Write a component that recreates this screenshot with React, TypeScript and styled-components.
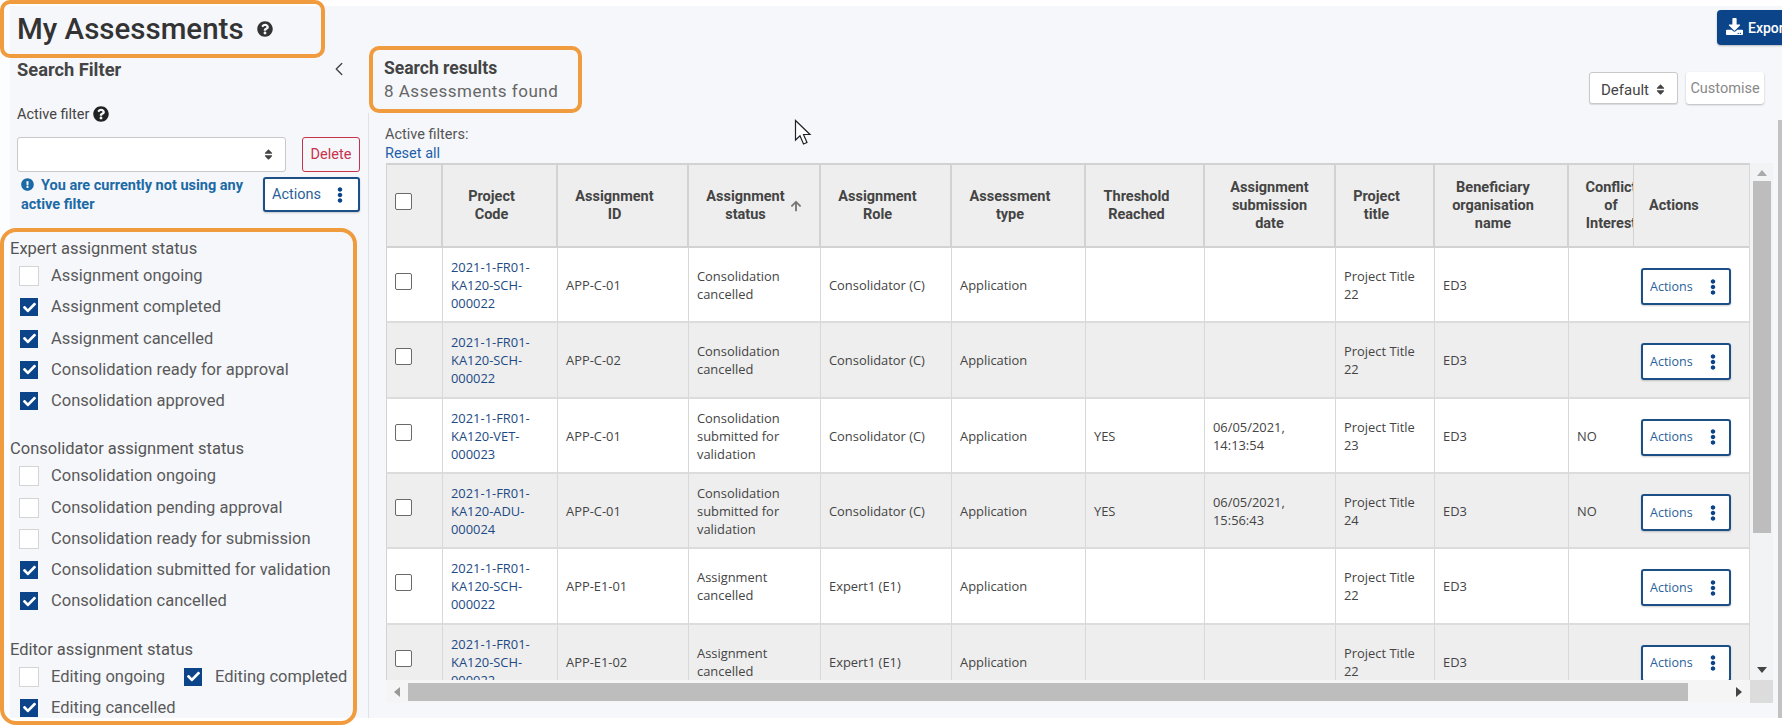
import React from 'react'
import styled, { createGlobalStyle } from 'styled-components'
import { ChevronLeft } from 'lucide-react'
import {
    FaArrowUp,
    FaCheck,
    FaDownload,
    FaEllipsisV,
    FaExclamationCircle,
    FaQuestionCircle,
    FaSort,
} from 'react-icons/fa'

const ORANGE = '#f09b3d'
const NAVY = '#0b4489'

const GlobalStyle = createGlobalStyle`
    html, body {
        margin: 0;
        padding: 0;
        background: #fff;
    }
    * {
        box-sizing: border-box;
    }
    body {
        font-family: Roboto, "Liberation Sans", sans-serif;
    }
`

const Page = styled.div`
    position: relative;
    width: 1782px;
    height: 727px;
    padding: 6px 0 9px;
    overflow: hidden;
    background: #fff;
`

const Canvas = styled.div`
    display: flex;
    height: 712px;
    background: linear-gradient(to right, #fcfdfe 10px, #f5f7fb 10px);
`

const PageScrollbar = styled.div`
    position: absolute;
    top: 120px;
    right: 0;
    width: 4px;
    height: 598px;
    background: #c2c2c2;
`

const Cursor = styled.svg`
    position: absolute;
    top: 119px;
    left: 794px;
`

const Sidebar = styled.aside`
    flex: 0 0 368px;
    margin-top: -6px;
    color: #444;
`

const Mark = styled.div`
    border: 4px solid ${ORANGE};
    border-radius: 10px;
`

const TitleBox = styled(Mark)`
    display: flex;
    align-items: center;
    gap: 13px;
    width: 325px;
    height: 58px;
    padding: 0 0 0 13px;
`

const Title = styled.h1`
    margin: 0;
    font-size: 29.5px;
    font-weight: 500;
    color: #333;
`

const TitleHelp = styled(FaQuestionCircle)`
    font-size: 16px;
    color: #333;
`

const SearchHead = styled.div`
    display: flex;
    align-items: center;
    justify-content: space-between;
    height: 22px;
    padding: 0 18px 0 17px;
    font-size: 18.3px;
    font-weight: 700;
`

const ActiveLabel = styled.div`
    display: flex;
    align-items: center;
    gap: 4px;
    height: 20px;
    margin-top: 24px;
    padding-left: 17px;
    font-size: 14.5px;
`

const FilterRow = styled.div`
    display: flex;
    gap: 16px;
    height: 35px;
    margin-top: 13px;
    padding-left: 17px;
`

const Select = styled.div<{ $width: number }>`
    display: flex;
    align-items: center;
    justify-content: flex-end;
    width: ${(p) => p.$width}px;
    background: #fff;
    border: 1px solid #c9c9c9;
    border-radius: 3px;
    padding-right: 10px;
    color: #444;
    font-size: 14px;
`

const SortIcon = styled(FaSort)`
    font-size: 13px;
    color: #444;
`

const DeleteButton = styled.div`
    display: flex;
    align-items: center;
    justify-content: center;
    width: 58px;
    border: 1px solid #c8324a;
    border-radius: 3px;
    color: #c8324a;
    font-size: 14.5px;
`

const NoteRow = styled.div`
    display: flex;
    justify-content: space-between;
    height: 35px;
    margin-top: 4px;
    padding: 0 8px 0 21px;
`

const Note = styled.div`
    width: 236px;
    font-size: 14.5px;
    font-weight: 700;
    line-height: 19px;
    color: #1b6aa5;
    svg {
        font-size: 13px;
        margin: 0 7px -1px 0;
    }
`

const ActionsButton = styled.div<{ $small?: boolean }>`
    display: flex;
    align-items: center;
    justify-content: space-between;
    width: ${(p) => (p.$small ? 90 : 97)}px;
    height: ${(p) => (p.$small ? 37 : 35)}px;
    margin-top: ${(p) => (p.$small ? 3 : 1)}px;
    padding: 0 ${(p) => (p.$small ? 8 : 10)}px 0 7px;
    background: #fff;
    border: 2px solid #1c4f86;
    border-radius: 3px;
    box-shadow: 0 1px 2px rgba(0, 0, 0, 0.2);
    color: #2a5f99;
    font-size: ${(p) => (p.$small ? 12.5 : 14.5)}px;
    font-family: ${(p) => (p.$small ? '"Open Sans", sans-serif' : 'inherit')};
    svg {
        font-size: 16px;
        color: ${NAVY};
    }
`

const FilterBox = styled(Mark)`
    width: 357px;
    height: 497px;
    margin-top: 17px;
    padding: 7px 0 0 6px;
    border-radius: 16px;
`

const Section = styled.div`
    & + & {
        margin-top: 22.4px;
    }
`

const SectionTitle = styled.div`
    height: 20px;
    margin-bottom: 1.4px;
    font-size: 16.5px;
    line-height: 20px;
    color: #555;
`

const Option = styled.div<{ $width?: number }>`
    display: flex;
    align-items: center;
    gap: 12px;
    height: 31.3px;
    width: ${(p) => (p.$width ? `${p.$width}px` : 'auto')};
    padding-left: 9px;
    font-size: 16.5px;
    color: #5a5a5a;
    white-space: nowrap;
`

const OptionLabel = styled.span`
    margin-top: -1px;
`

const OptionLine = styled.div`
    display: flex;
`

const Box = styled.span<{ $checked?: boolean }>`
    display: flex;
    flex: none;
    align-items: center;
    justify-content: center;
    width: 20px;
    height: 20px;
    background: ${(p) => (p.$checked ? NAVY : '#fff')};
    border: ${(p) => (p.$checked ? `1px solid #f5f7fb` : '1px solid #d4d4d4')};
    color: #fff;
    svg {
        font-size: 13px;
    }
`

const Main = styled.main`
    flex: 1;
    display: flex;
    flex-direction: column;
    min-width: 0;
`

const TopBar = styled.div`
    display: flex;
    justify-content: flex-end;
    height: 35px;
    margin: 4px -25px 0 0;
`

const ExportButton = styled.div`
    display: flex;
    align-items: center;
    gap: 5px;
    width: 90px;
    padding-left: 9px;
    background: ${NAVY};
    border-radius: 4px;
    box-shadow: 0 1px 2px rgba(0, 0, 0, 0.25);
    color: #fff;
    font-size: 14px;
    font-weight: 500;
    svg {
        font-size: 17px;
        margin-top: -3px;
    }
`

const ResultsBar = styled.div`
    display: flex;
    justify-content: space-between;
    height: 67px;
    margin-top: 1px;
    padding: 0 18px 0 1px;
`

const ResultsBox = styled(Mark)`
    width: 213px;
    padding: 7px 0 0 11px;
    background: #f5f7fb;
`

const ResultsTitle = styled.div`
    font-size: 17.5px;
    font-weight: 700;
    line-height: 23px;
    color: #444;
`

const ResultsCount = styled.div`
    font-size: 17px;
    line-height: 23px;
    letter-spacing: 0.5px;
    color: #666;
`

const Controls = styled.div`
    display: flex;
    gap: 8px;
    height: 32px;
    margin-top: 26px;
`

const ViewSelect = styled(Select)`
    justify-content: space-between;
    padding: 3px 10px 0 11px;
    font-size: 15px;
    box-shadow: 0 1px 1px rgba(0, 0, 0, 0.12);
`

const CustomiseButton = styled.div`
    display: flex;
    align-items: center;
    justify-content: center;
    width: 78px;
    padding-top: 1px;
    background: #fff;
    border-radius: 3px;
    box-shadow: 0 1px 2px rgba(0, 0, 0, 0.25);
    color: #888;
    font-size: 14.5px;
`

const Results = styled.section`
    flex: 1;
    padding: 13px 0 0 17px;
    border-left: 1px solid #dfe1e6;
`

const ActiveFilters = styled.div`
    margin-left: -1px;
    font-size: 14.5px;
    line-height: 18px;
    color: #555;
`

const ResetLink = styled.a`
    display: block;
    margin: 1px 0 0 -1px;
    font-size: 14.5px;
    line-height: 18px;
    color: #1f5fa8;
`

const Frame = styled.div`
    display: grid;
    grid-template-columns: 1364px 23px;
    grid-template-rows: 517px 23px;
    width: 1387px;
`

const TableClip = styled.div`
    overflow: hidden;
    border-right: 1px solid #d8d8d8;
`

const Table = styled.table`
    width: 1385px;
    table-layout: fixed;
    border-collapse: separate;
    border-spacing: 0;
`

const Th = styled.th<{ $sortable?: boolean }>`
    height: 85px;
    padding: 0 ${(p) => (p.$sortable ? 22 : 6)}px 0 6px;
    background: #eeeeee;
    border-top: 2px solid #d2d2d2;
    border-right: 2px solid #d2d2d2;
    border-bottom: 2px solid #d2d2d2;
    font-size: 14.5px;
    font-weight: 700;
    line-height: 18px;
    color: #444;
    text-align: center;
    white-space: pre-line;
    &:first-child {
        border-left: 1px solid #d2d2d2;
        padding-left: 8px;
        text-align: left;
    }
`

const HeadInner = styled.span`
    display: inline-flex;
    align-items: center;
    gap: 5px;
    svg {
        font-size: 12px;
        color: #777;
    }
`

const ActionsHead = styled(Th)`
    position: sticky;
    right: 0;
    padding-left: 15px;
    text-align: left;
    border-left: 1px solid #d2d2d2;
    border-right: 0;
`

const Tr = styled.tr<{ $even: boolean }>`
    height: 75.33px;
    background: ${(p) => (p.$even ? '#eeeeee' : '#fff')};
`

const Td = styled.td`
    padding: 1px 6px 0 8px;
    background: inherit;
    border-right: 1px solid #d8d8d8;
    border-bottom: 2px solid #dcdcdc;
    font-family: "Open Sans", sans-serif;
    font-size: 12.9px;
    line-height: 18px;
    color: #444;
    &:first-child {
        border-left: 1px solid #d2d2d2;
    }
`

const ProjectLink = styled.a`
    color: #1d4a85;
`

const ActionsCell = styled(Td)`
    position: sticky;
    right: 0;
    padding-left: 8px;
    border-right: 0;
`

const RowCheck = styled.span<{ $head?: boolean }>`
    display: block;
    width: 17px;
    height: 17px;
    margin-bottom: ${(p) => (p.$head ? 9 : 7)}px;
    background: #fff;
    border: 1px solid #6a6a6a;
    border-radius: 2px;
`

const VScroll = styled.div`
    display: flex;
    flex-direction: column;
    align-items: center;
    padding: 7px 2px 7px 3px;
    background: #f2f3f5;
`

const VThumb = styled.div`
    flex: none;
    width: 18px;
    height: 352px;
    margin: 5px 0 auto;
    background: #bdbdbd;
`

const HScroll = styled.div`
    display: flex;
    align-items: center;
    padding: 0 8px;
    background: #f5f5f5;
`

const HThumb = styled.div`
    flex: none;
    width: 1280px;
    height: 18px;
    margin: 0 auto 0 8px;
    background: #bdbdbd;
`

const Corner = styled.div`
    background: #dcdcdc;
`

const Triangle = styled.span<{ $dir: 'up' | 'down' | 'left' | 'right' }>`
    flex: none;
    width: 0;
    height: 0;
    border-style: solid;
    border-color: transparent;
    border-width: ${(p) => (p.$dir === 'up' || p.$dir === 'down' ? '6px 5px' : '5px 6px')};
    ${(p) => {
        if (p.$dir === 'up') return 'border-top-width: 0; border-bottom-color: #aaa;'
        if (p.$dir === 'down') return 'border-bottom-width: 0; border-top-color: #444;'
        if (p.$dir === 'left') return 'border-left-width: 0; border-right-color: #999;'
        return 'border-right-width: 0; border-left-color: #444;'
    }}
`

const columns = [57, 115, 131, 132, 131, 134, 119, 131, 99, 134, 86, 116]

const heads = [
    { label: 'Project\nCode', sortable: true },
    { label: 'Assignment\nID', sortable: true },
    { label: 'Assignment\nstatus', sortable: false, sorted: true },
    { label: 'Assignment\nRole', sortable: true },
    { label: 'Assessment\ntype', sortable: true },
    { label: 'Threshold\nReached', sortable: true },
    { label: 'Assignment\nsubmission\ndate', sortable: false },
    { label: 'Project\ntitle', sortable: true },
    { label: 'Beneficiary\norganisation\nname', sortable: true },
    { label: 'Conflict\nof\nInterest', sortable: false },
]

const rows = [
    {
        code: '2021-1-FR01-KA120-SCH-000022',
        id: 'APP-C-01',
        status: 'Consolidation cancelled',
        role: 'Consolidator (C)',
        reached: '',
        date: '',
        title: 'Project Title 22',
        conflict: '',
    },
    {
        code: '2021-1-FR01-KA120-SCH-000022',
        id: 'APP-C-02',
        status: 'Consolidation cancelled',
        role: 'Consolidator (C)',
        reached: '',
        date: '',
        title: 'Project Title 22',
        conflict: '',
    },
    {
        code: '2021-1-FR01-KA120-VET-000023',
        id: 'APP-C-01',
        status: 'Consolidation submitted for validation',
        role: 'Consolidator (C)',
        reached: 'YES',
        date: '06/05/2021, 14:13:54',
        title: 'Project Title 23',
        conflict: 'NO',
    },
    {
        code: '2021-1-FR01-KA120-ADU-000024',
        id: 'APP-C-01',
        status: 'Consolidation submitted for validation',
        role: 'Consolidator (C)',
        reached: 'YES',
        date: '06/05/2021, 15:56:43',
        title: 'Project Title 24',
        conflict: 'NO',
    },
    {
        code: '2021-1-FR01-KA120-SCH-000022',
        id: 'APP-E1-01',
        status: 'Assignment cancelled',
        role: 'Expert1 (E1)',
        reached: '',
        date: '',
        title: 'Project Title 22',
        conflict: '',
    },
    {
        code: '2021-1-FR01-KA120-SCH-000022',
        id: 'APP-E1-02',
        status: 'Assignment cancelled',
        role: 'Expert1 (E1)',
        reached: '',
        date: '',
        title: 'Project Title 22',
        conflict: '',
    },
]

const expertOptions = [
    { label: 'Assignment ongoing', checked: false },
    { label: 'Assignment completed', checked: true },
    { label: 'Assignment cancelled', checked: true },
    { label: 'Consolidation ready for approval', checked: true },
    { label: 'Consolidation approved', checked: true },
]

const consolidatorOptions = [
    { label: 'Consolidation ongoing', checked: false },
    { label: 'Consolidation pending approval', checked: false },
    { label: 'Consolidation ready for submission', checked: false },
    { label: 'Consolidation submitted for validation', checked: true },
    { label: 'Consolidation cancelled', checked: true },
]

const StatusOption = ({ label, checked, width }: { label: string; checked: boolean; width?: number }) => (
    <Option $width={width}>
        <Box $checked={checked}>{checked && <FaCheck />}</Box>
        <OptionLabel>{label}</OptionLabel>
    </Option>
)

const App = () => {
    return (
        <Page>
            <GlobalStyle />
            <Canvas>
                <Sidebar>
                    <TitleBox>
                        <Title>My Assessments</Title>
                        <TitleHelp />
                    </TitleBox>
                    <SearchHead>
                        Search Filter
                        <ChevronLeft size={22} strokeWidth={1.5} />
                    </SearchHead>
                    <ActiveLabel>
                        Active filter
                        <FaQuestionCircle size={16} color="#222" />
                    </ActiveLabel>
                    <FilterRow>
                        <Select $width={269}>
                            <SortIcon />
                        </Select>
                        <DeleteButton>Delete</DeleteButton>
                    </FilterRow>
                    <NoteRow>
                        <Note>
                            <FaExclamationCircle />
                            You are currently not using any active filter
                        </Note>
                        <ActionsButton>
                            Actions
                            <FaEllipsisV />
                        </ActionsButton>
                    </NoteRow>
                    <FilterBox>
                        <Section>
                            <SectionTitle>Expert assignment status</SectionTitle>
                            {expertOptions.map((item) => (
                                <StatusOption key={item.label} label={item.label} checked={item.checked} />
                            ))}
                        </Section>
                        <Section>
                            <SectionTitle>Consolidator assignment status</SectionTitle>
                            {consolidatorOptions.map((item) => (
                                <StatusOption key={item.label} label={item.label} checked={item.checked} />
                            ))}
                        </Section>
                        <Section>
                            <SectionTitle>Editor assignment status</SectionTitle>
                            <OptionLine>
                                <StatusOption label="Editing ongoing" checked={false} width={164} />
                                <StatusOption label="Editing completed" checked />
                            </OptionLine>
                            <StatusOption label="Editing cancelled" checked />
                        </Section>
                    </FilterBox>
                </Sidebar>
                <Main>
                    <TopBar>
                        <ExportButton>
                            <FaDownload />
                            Export
                        </ExportButton>
                    </TopBar>
                    <ResultsBar>
                        <ResultsBox>
                            <ResultsTitle>Search results</ResultsTitle>
                            <ResultsCount>8 Assessments found</ResultsCount>
                        </ResultsBox>
                        <Controls>
                            <ViewSelect $width={89}>
                                Default
                                <SortIcon />
                            </ViewSelect>
                            <CustomiseButton>Customise</CustomiseButton>
                        </Controls>
                    </ResultsBar>
                    <Results>
                        <ActiveFilters>Active filters:</ActiveFilters>
                        <ResetLink>Reset all</ResetLink>
                        <Frame>
                            <TableClip>
                                <Table>
                                    <colgroup>
                                        {columns.map((w, i) => (
                                            <col key={i} width={w} />
                                        ))}
                                    </colgroup>
                                    <thead>
                                        <tr>
                                            <Th>
                                                <RowCheck $head />
                                            </Th>
                                            {heads.map((h) => (
                                                <Th key={h.label} $sortable={h.sortable}>
                                                    {h.sorted ? (
                                                        <HeadInner>
                                                            <span>{h.label}</span>
                                                            <FaArrowUp />
                                                        </HeadInner>
                                                    ) : (
                                                        h.label
                                                    )}
                                                </Th>
                                            ))}
                                            <ActionsHead>Actions</ActionsHead>
                                        </tr>
                                    </thead>
                                    <tbody>
                                        {rows.map((row, index) => (
                                            <Tr key={index} $even={index % 2 === 1}>
                                                <Td>
                                                    <RowCheck />
                                                </Td>
                                                <Td>
                                                    <ProjectLink>{row.code}</ProjectLink>
                                                </Td>
                                                <Td>{row.id}</Td>
                                                <Td>{row.status}</Td>
                                                <Td>{row.role}</Td>
                                                <Td>Application</Td>
                                                <Td>{row.reached}</Td>
                                                <Td>{row.date}</Td>
                                                <Td>{row.title}</Td>
                                                <Td>ED3</Td>
                                                <Td>{row.conflict}</Td>
                                                <ActionsCell>
                                                    <ActionsButton $small>
                                                        Actions
                                                        <FaEllipsisV />
                                                    </ActionsButton>
                                                </ActionsCell>
                                            </Tr>
                                        ))}
                                    </tbody>
                                </Table>
                            </TableClip>
                            <VScroll>
                                <Triangle $dir="up" />
                                <VThumb />
                                <Triangle $dir="down" />
                            </VScroll>
                            <HScroll>
                                <Triangle $dir="left" />
                                <HThumb />
                                <Triangle $dir="right" />
                            </HScroll>
                            <Corner />
                        </Frame>
                    </Results>
                </Main>
            </Canvas>
            <PageScrollbar />
            <Cursor width="20" height="28" viewBox="0 0 20 28">
                <path d="M1.5 1.5 L1.5 21 L6 16.8 L9.5 25 L13 23.5 L9.5 15.5 L16 15.5 Z" fill="#fff" stroke="#222" strokeWidth="1.2" />
            </Cursor>
        </Page>
    )
}

export default App
